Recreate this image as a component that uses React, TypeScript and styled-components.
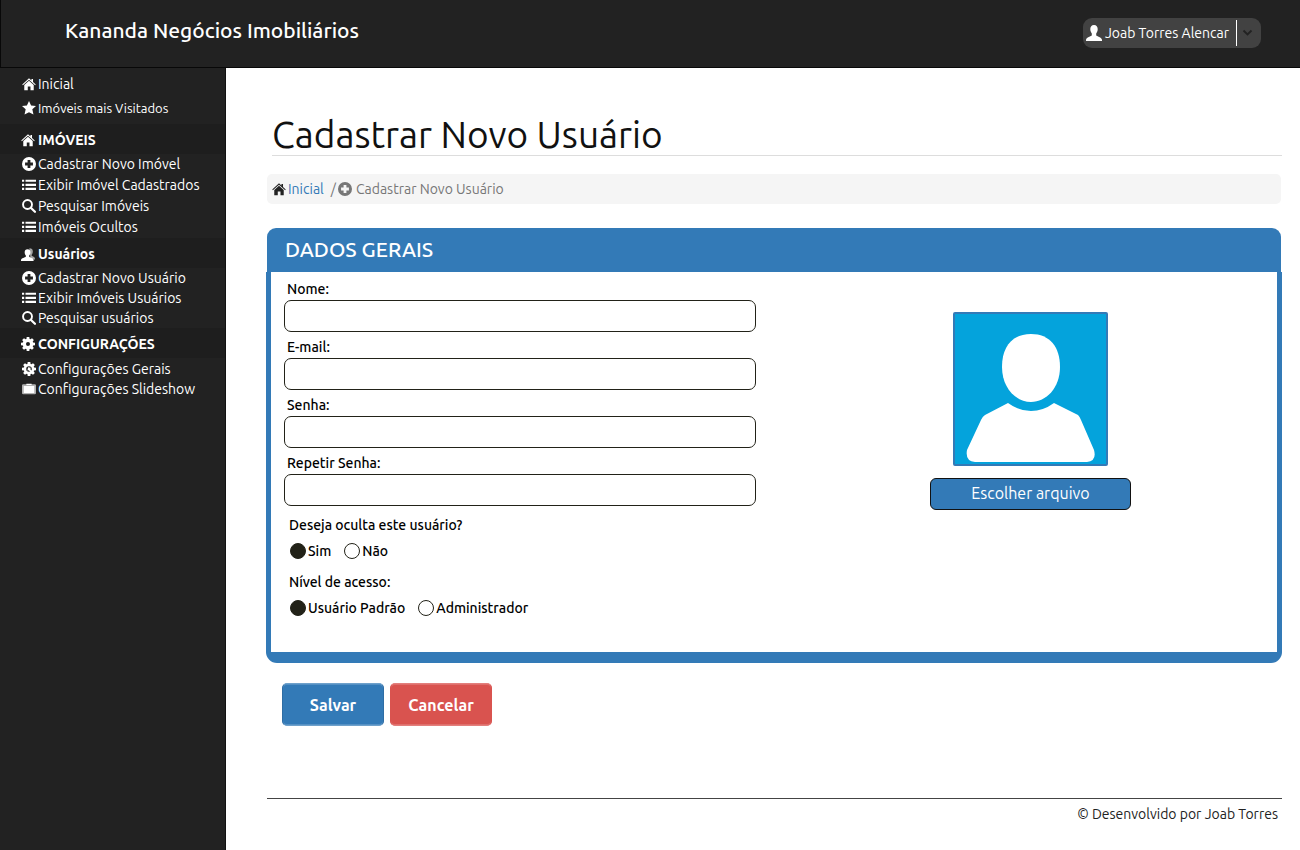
import React, { useState } from "react";
import styled, { createGlobalStyle, css } from "styled-components";

const GlobalStyle = createGlobalStyle`
  *, *::before, *::after { box-sizing: border-box; }
  body {
    margin: 0;
    background: #fff;
    color: #000;
    font-family: Ubuntu, "Noto Sans", sans-serif;
    font-size: 14px;
    line-height: 20px;
  }
  button, input { font-family: inherit; }
`;

/* ---------- icons ---------- */

type IconName = "home" | "star" | "plus" | "list" | "search" | "user" | "people" | "cog" | "cogOpen" | "slides";

const COG =
  "M6.500 0h3l.3 2.200 1 .4L12.600 1.300l2.100 2.100-1.300 1.800.4 1 2.200.3v3l-2.200.3-.4 1 1.300 1.800-2.100 2.100-1.800-1.300-1 .4-.3 2.200h-3l-.3-2.200-1-.4-1.800 1.300-2.100-2.100 1.300-1.800-.4-1L0 9.500v-3l2.200-.3.4-1L1.300 3.400l2.100-2.100 1.800 1.300 1-.4z";

const shapes: Record<IconName, React.ReactNode> = {
  home: (
    <>
      <path d="M8 1.500l2.800 2.500V2.200h1.800v3.400L15.700 8.500l-.7.800L8 3.100 1 9.300.3 8.500z" />
      <path d="M8 4.200l5.400 4.900V15H9.700v-4.200H6.600V15H2.600V9.100z" />
    </>
  ),
  star: <path d="M8 0l2.400 5 5.600.6-4.200 3.900 1.300 6L8 12.800l-5.100 2.700 1.300-6L0 5.600 5.600 5z" />,
  plus: <path fillRule="evenodd" d="M8 0a8 8 0 110 16A8 8 0 018 0zM6.400 3.500v2.900H3.500v3.200h2.900v2.900h3.200V9.600h2.900V6.400H9.600V3.500z" />,
  list: <path d="M0 2h2.500v2.400H0zM4 2h12v2.400H4zM0 6.600h2.500V9H0zM4 6.600h12V9H4zM0 11.200h2.500v2.400H0zM4 11.200h12v2.400H4z" />,
  search: (
    <>
      <circle cx="6.300" cy="6.300" r="5.100" fill="none" stroke="currentColor" strokeWidth="2.200" />
      <path d="M10 10l4.800 4.600" fill="none" stroke="currentColor" strokeWidth="2.600" strokeLinecap="round" />
    </>
  ),
  user: <path d="M8 0c2.500 0 3.700 1.700 3.700 4 0 2-.7 3.400-1.500 4.500v1.700c.2 1.200 5.800 1.800 5.800 4.800v1H0v-1c0-3 5.600-3.600 5.800-4.800V8.500C5 7.400 4.300 6 4.300 4c0-2.300 1.200-4 3.700-4z" />,
  people: (
    <>
      <path opacity=".6" d="M9.500 1.500c3 0 4.200 1.700 4 3.900-.1 1.600-.6 2.700-1.300 3.500v1.200c1 .8 3.800 1.400 3.800 3.400v.7h-5z" />
      <path d="M7.500 2.500c2.300 0 3.400 1.500 3.300 3.700-.1 1.600-.7 2.700-1.400 3.500v1.300c.3 1 5 1.300 5 4v1H0v-1c0-2.700 5.200-3 5.500-4V9.700C4.800 8.900 4.300 7.800 4.200 6.200 4.100 4 5.200 2.500 7.500 2.500z" />
    </>
  ),
  cog: <path fillRule="evenodd" d={COG + "M8 5.700a2.300 2.300 0 100 4.600 2.300 2.300 0 000-4.600z"} />,
  cogOpen: (
    <>
      <path fillRule="evenodd" d={COG + "M8 4.800a3.200 3.200 0 100 6.400 3.200 3.200 0 000-6.400z"} />
      <path d="M7 6l3 .7-.5 1.500 3.600 3.600-1.500 1.500-3.900-3.900-1.500.2z" />
    </>
  ),
  slides: (
    <>
      <path opacity=".65" d="M1.500 2.500h13A1.500 1.500 0 0116 4v8.500a1.500 1.500 0 01-1.500 1.500h-13A1.500 1.500 0 010 12.500V4a1.500 1.500 0 011.500-1.500z" />
      <path d="M2 4.500h12v8H2zM5 2h6v1.500H5z" />
    </>
  ),
};

const Svg = styled.svg<{ $size: number }>`
  width: ${(p) => p.$size}px;
  height: ${(p) => p.$size}px;
  flex: none;
  fill: currentColor;
`;

const Icon = ({ name, size = 14 }: { name: IconName; size?: number }) => (
  <Svg $size={size} viewBox="0 0 16 16" aria-hidden="true">
    {shapes[name]}
  </Svg>
);

/* ---------- page frame ---------- */

const Page = styled.div`
  min-height: 100vh;
  display: flex;
  flex-direction: column;
`;

const TopBar = styled.header`
  height: 68px;
  padding: 0 39px 8px 64px;
  display: flex;
  align-items: center;
  justify-content: space-between;
  background: #222;
  border-bottom: 1px solid #080808;
  border-left: 1px solid #080808;
  color: #fff;
`;

const Brand = styled.div`
  font-size: 21px;
  font-weight: 500;
  line-height: 28px;
`;

const UserMenu = styled.button`
  height: 30px;
  margin-top: 6px;
  padding: 0 8px 0 3px;
  display: flex;
  align-items: center;
  gap: 3px;
  border: 0;
  border-radius: 9px;
  background: #424242;
  color: #fff;
  font-size: 14px;
  cursor: pointer;
`;

const Caret = styled.span`
  height: 26px;
  margin-left: 4px;
  padding-left: 5px;
  display: flex;
  align-items: center;
  border-left: 1px solid #fff;
  color: #222;
`;

const Columns = styled.div`
  flex: 1;
  display: flex;
`;

/* ---------- sidebar ---------- */

const Sidebar = styled.nav`
  flex: none;
  width: 226px;
  padding-top: 4px;
  background: #222;
  border-right: 1px solid #111;
  color: #fff;
`;

const SectionTitle = styled.h2`
  height: 30px;
  margin: 0;
  padding: 1px 0 0 21px;
  display: flex;
  align-items: center;
  gap: 3px;
  background: #1e1e1e;
  font-size: 14px;
  font-weight: 600;
`;

const Links = styled.ul<{ $gap: number; $pad: string }>`
  margin: 0;
  padding: ${(p) => p.$pad};
  display: flex;
  flex-direction: column;
  gap: ${(p) => p.$gap}px;
  list-style: none;
`;

const NavLink = styled.a<{ $small?: boolean }>`
  display: flex;
  align-items: center;
  gap: 2px;
  color: #fff;
  font-size: ${(p) => (p.$small ? 13 : 14)}px;
  text-decoration: none;
  white-space: nowrap;
`;

type Link = { icon: IconName; text: string; small?: boolean };
type Group = { title?: string; icon?: IconName; gap: number; pad: string; links: Link[] };

const groups: Group[] = [
  {
    gap: 4,
    pad: "2px 0 6px 22px",
    links: [
      { icon: "home", text: "Inicial" },
      { icon: "star", text: "Imóveis mais Visitados", small: true },
    ],
  },
  {
    title: "IMÓVEIS",
    icon: "home",
    gap: 1,
    pad: "0 0 1px 22px",
    links: [
      { icon: "plus", text: "Cadastrar Novo Imóvel" },
      { icon: "list", text: "Exibir Imóvel Cadastrados" },
      { icon: "search", text: "Pesquisar Imóveis" },
      { icon: "list", text: "Imóveis Ocultos" },
    ],
  },
  {
    title: "Usuários",
    icon: "people",
    gap: 0,
    pad: "0 0 0 22px",
    links: [
      { icon: "plus", text: "Cadastrar Novo Usuário" },
      { icon: "list", text: "Exibir Imóveis Usuários" },
      { icon: "search", text: "Pesquisar usuários" },
    ],
  },
  {
    title: "CONFIGURAÇÕES",
    icon: "cog",
    gap: 0,
    pad: "1px 0 0 22px",
    links: [
      { icon: "cogOpen", text: "Configurações Gerais" },
      { icon: "slides", text: "Configurações Slideshow" },
    ],
  },
];

/* ---------- content ---------- */

const Main = styled.main`
  flex: 1;
  min-width: 0;
  padding: 46px 18px 0 40px;
`;

const PageTitle = styled.h1`
  margin: 0 0 18px 6px;
  border-bottom: 1px solid #ddd;
  color: #111;
  font-size: 37px;
  font-weight: 400;
  line-height: 41px;
`;

const Breadcrumb = styled.nav`
  height: 30px;
  margin: 0 1px 24px;
  padding-left: 5px;
  display: flex;
  align-items: center;
  gap: 2px;
  border-radius: 5px;
  background: #f5f5f5;
  color: #777;
  a {
    display: flex;
    align-items: center;
    gap: 2px;
    color: #337ab7;
    text-decoration: none;
  }
  a svg { color: #222; }
`;

const Slash = styled.span`
  margin-left: 5px;
`;

const Current = styled.span`
  display: flex;
  align-items: center;
  gap: 4px;
`;

const PanelTitle = styled.h2`
  height: 44px;
  margin: 0 1px;
  padding-left: 18px;
  border-radius: 9px 9px 0 0;
  background: #337ab7;
  color: #fff;
  font-size: 21px;
  font-weight: 500;
  line-height: 42px;
`;

const PanelBody = styled.div`
  min-height: 391px;
  padding: 7px 0 20px 13px;
  display: flex;
  gap: 28px;
  border: solid #337ab7;
  border-width: 0 5px 11px;
  border-radius: 0 0 11px 11px;
`;

const Fields = styled.div`
  flex: 0 1 472px;
`;

const Field = styled.div`
  height: 58px;
`;

const FieldLabel = styled.label`
  height: 21px;
  padding-left: 3px;
  display: block;
  font-weight: 500;
`;

const TextInput = styled.input`
  width: 100%;
  height: 32px;
  padding: 0 10px;
  display: block;
  border: 1px solid #222218;
  border-radius: 7px;
  background: #fff;
  font-size: 14px;
`;

const Choice = styled.fieldset`
  margin: 4px 0 0;
  padding: 0 0 0 5px;
  border: 0;
  & + & { margin-top: 11px; }
  legend {
    padding: 0;
    font-weight: 500;
  }
`;

const Options = styled.div`
  margin-top: 6px;
  padding-left: 1px;
  display: flex;
  gap: 13px;
`;

const Option = styled.label`
  display: flex;
  align-items: center;
  gap: 2px;
  font-weight: 500;
`;

const Radio = styled.input`
  width: 16px;
  height: 16px;
  margin: 0;
  appearance: none;
  border: 1px solid #222218;
  border-radius: 50%;
  background: #fff;
  &:checked { background: #222218; }
`;

const Photo = styled.div`
  flex: 1;
  padding-top: 33px;
  display: flex;
  flex-direction: column;
  align-items: center;
  gap: 12px;
`;

const Avatar = styled.svg`
  width: 155px;
  height: 154px;
`;

const FileButton = styled.button`
  width: 201px;
  height: 32px;
  padding: 0 0 2px;
  border: 1px solid #111;
  border-radius: 6px;
  background: #337ab7;
  color: #fff;
  font-size: 16px;
  cursor: pointer;
`;

const Actions = styled.div`
  margin-top: 20px;
  padding-left: 16px;
  display: flex;
  gap: 6px;
`;

const ActionButton = styled.button<{ $danger?: boolean }>`
  width: 102px;
  height: 43px;
  padding: 0;
  border: 1px solid;
  border-radius: 5px;
  color: #fff;
  font-size: 16px;
  font-weight: 600;
  cursor: pointer;
  ${(p) =>
    p.$danger
      ? css`
          background: #d9534f;
          border-color: #e37f7c #d9534f;
          box-shadow: inset 0 1px #df6f6c, inset 0 -1px #df6f6c;
        `
      : css`
          background: #337ab7;
          border-color: #6fa1cb #2e6da4;
          box-shadow: inset 0 1px #5590c3, inset 0 -1px #5590c3;
        `}
`;

const Footer = styled.footer`
  margin: 72px 0 0 1px;
  padding: 5px 4px 26px;
  border-top: 1px solid #444;
  color: #222;
  text-align: right;
`;

const fields = [
  { id: "nome", label: "Nome:", type: "text" },
  { id: "email", label: "E-mail:", type: "email" },
  { id: "senha", label: "Senha:", type: "password" },
  { id: "repetir", label: "Repetir Senha:", type: "password" },
];

const choices = [
  { name: "ocultar", legend: "Deseja oculta este usuário?", options: ["Sim", "Não"] },
  { name: "nivel", legend: "Nível de acesso:", options: ["Usuário Padrão", "Administrador"] },
];

export default function App() {
  const [picked, setPicked] = useState<Record<string, string>>({ ocultar: "Sim", nivel: "Usuário Padrão" });

  return (
    <Page>
      <GlobalStyle />
      <TopBar>
        <Brand>Kananda Negócios Imobiliários</Brand>
        <UserMenu type="button">
          <Icon name="user" size={16} />
          Joab Torres Alencar
          <Caret>
            <svg width="11" height="8" viewBox="0 0 11 8" aria-hidden="true">
              <path d="M1.500 1.500l4 4 4-4" fill="none" stroke="currentColor" strokeWidth="1.800" />
            </svg>
          </Caret>
        </UserMenu>
      </TopBar>
      <Columns>
        <Sidebar>
          {groups.map((group, i) => (
            <React.Fragment key={i}>
              {group.title && group.icon && (
                <SectionTitle>
                  <Icon name={group.icon} />
                  {group.title}
                </SectionTitle>
              )}
              <Links $gap={group.gap} $pad={group.pad}>
                {group.links.map((link) => (
                  <li key={link.text}>
                    <NavLink href="#" $small={link.small}>
                      <Icon name={link.icon} />
                      {link.text}
                    </NavLink>
                  </li>
                ))}
              </Links>
            </React.Fragment>
          ))}
        </Sidebar>
        <Main>
          <PageTitle>Cadastrar Novo Usuário</PageTitle>
          <Breadcrumb>
            <a href="#">
              <Icon name="home" />
              Inicial
            </a>
            <Slash>/</Slash>
            <Current>
              <Icon name="plus" />
              Cadastrar Novo Usuário
            </Current>
          </Breadcrumb>
          <form>
            <PanelTitle>DADOS GERAIS</PanelTitle>
            <PanelBody>
              <Fields>
                {fields.map((f) => (
                  <Field key={f.id}>
                    <FieldLabel htmlFor={f.id}>{f.label}</FieldLabel>
                    <TextInput id={f.id} type={f.type} />
                  </Field>
                ))}
                {choices.map((c) => (
                  <Choice key={c.name}>
                    <legend>{c.legend}</legend>
                    <Options>
                      {c.options.map((o) => (
                        <Option key={o}>
                          <Radio
                            type="radio"
                            name={c.name}
                            checked={picked[c.name] === o}
                            onChange={() => setPicked({ ...picked, [c.name]: o })}
                          />
                          {o}
                        </Option>
                      ))}
                    </Options>
                  </Choice>
                ))}
              </Fields>
              <Photo>
                <Avatar viewBox="0 0 155 154" role="img" aria-label="Foto do usuário">
                  <rect x="1" y="1" width="153" height="152" rx="1" fill="#04a3dc" stroke="#337ab7" strokeWidth="2" />
                  <path
                    d="M78 22C97 22 107 35 107 55C107 76 93 90 78 90C63 90 49 76 49 55C49 35 59 22 78 22Z"
                    fill="#fff"
                  />
                  <path
                    d="M55 91Q66 99 78 99Q90 99 101 91L125 103Q127 105 128 108L141 138Q144 149 134 150H22Q12 149 14 138L28 108Q29 105 32 103Z"
                    fill="#fff"
                  />
                </Avatar>
                <FileButton type="button">Escolher arquivo</FileButton>
              </Photo>
            </PanelBody>
            <Actions>
              <ActionButton type="button">Salvar</ActionButton>
              <ActionButton type="button" $danger>
                Cancelar
              </ActionButton>
            </Actions>
          </form>
          <Footer>© Desenvolvido por Joab Torres</Footer>
        </Main>
      </Columns>
    </Page>
  );
}
